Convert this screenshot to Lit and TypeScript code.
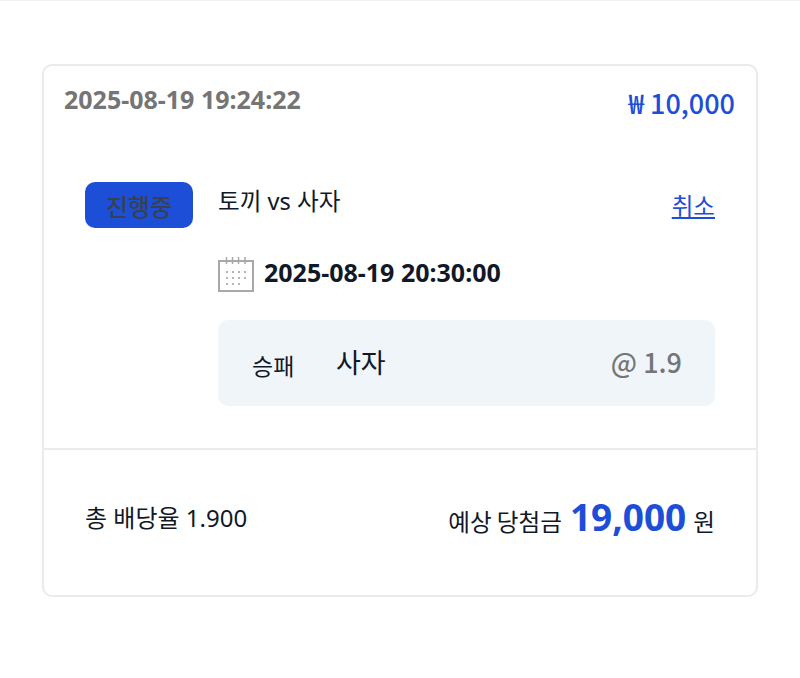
import { LitElement, html, css, svg } from "lit";
import { customElement } from "lit/decorators.js";

@customElement("app-root")
export class AppRoot extends LitElement {
  static styles = css`
    :host {
      display: block;
      width: 800px;
      height: 678px;
      box-sizing: border-box;
      background: #fff;
      border-top: 1px solid #f0f0f0;
      padding: 63px 42px 0;
      font-family: "Noto Sans", "Noto Sans CJK KR", sans-serif;
      color: #111827;
    }
    .card {
      box-sizing: border-box;
      height: 533px;
      border: 2px solid #e8ecef;
      border-radius: 10px;
      display: flex;
      flex-direction: column;
    }
    .top {
      display: flex;
      justify-content: space-between;
      padding: 16px 21px 0 20px;
    }
    .time { font-size: 25px; line-height: 34px; font-weight: 700; color: #757575; }
    .stake { font-family: "Noto Sans CJK KR", sans-serif; font-size: 27px; line-height: 38px; margin-top: 2px; font-weight: 500; color: #1d4ed8; }
    .body {
      flex: 1;
      display: flex;
      gap: 25px;
      padding: 60px 41px 0;
    }
    .badge {
      box-sizing: border-box;
      width: 108px;
      height: 46px;
      border-radius: 10px;
      background: #1d4ed8;
      color: #374151;
      font-size: 24px;
      font-weight: 500;
      display: flex;
      align-items: center;
      justify-content: center;
      flex: none;
    }
    .main { flex: 1; display: flex; flex-direction: column; }
    .title-row { display: flex; justify-content: space-between; }
    .title { font-size: 23.6px; line-height: 36px; margin-top: 1px; }
    .cancel { font-size: 23.5px; line-height: 36px; margin-top: 6px; color: #1d4ed8; text-decoration: underline; }
    .when { display: flex; align-items: center; gap: 10px; margin-top: 33px; font-size: 25px; font-weight: 700; height: 36px; }
    .when svg { display: block; flex: none; }
    .when span { margin-top: -6px; }
    .pick {
      margin-top: 27px;
      height: 86px;
      box-sizing: border-box;
      border-radius: 10px;
      background: #f0f5fa;
      display: flex;
      align-items: center;
      padding: 0 33px;
    }
    .kind { font-size: 23px; margin: 4px 0 0 1px; width: 84px; }
    .team { font-size: 27px; flex: 1; margin-top: -4px; }
    .odds { font-family: "Noto Sans CJK KR", sans-serif; font-size: 27px; font-weight: 500; color: #757575; margin-top: -3px; }
    .foot {
      height: 147px;
      box-sizing: border-box;
      border-top: 2px solid #e8ecef;
      display: flex;
      align-items: center;
      justify-content: space-between;
      padding: 0 41px 12px;
    }
    .total { font-size: 24px; }
    .win { display: flex; align-items: baseline; font-size: 23.6px; word-spacing: -1px; }
    .win b { font-size: 37px; font-weight: 700; color: #1d4ed8; margin: 0 7px 0 8px; }
  `;

  render() {
    return html`
      <div class="card">
        <div class="top">
          <div class="time">2025-08-19 19:24:22</div>
          <div class="stake">₩ 10,000</div>
        </div>
        <div class="body">
          <div class="badge">진행중</div>
          <div class="main">
            <div class="title-row">
              <div class="title">토끼 vs 사자</div>
              <div class="cancel">취소</div>
            </div>
            <div class="when">
              <svg width="36" height="36" viewBox="0 0 36 36" fill="none">
                <rect x="1" y="4" width="34" height="30" stroke="#a8a8a8" stroke-width="2"></rect>
                <path d="M8.5 0v7M14.5 0v7M20.5 0v7M27 0v7" stroke="#a8a8a8" stroke-width="1.5"></path>
                ${[14, 20, 26].map((y, r) =>
                  [8, 14, 20, 26].slice(0, r === 2 ? 3 : 4).map(
                    (x) => svg`<rect x=${x} y=${y} width="2" height="2" fill="#b5b5b5"></rect>`
                  )
                )}
              </svg>
              <span>2025-08-19 20:30:00</span>
            </div>
            <div class="pick">
              <div class="kind">승패</div>
              <div class="team">사자</div>
              <div class="odds">@ 1.9</div>
            </div>
          </div>
        </div>
        <div class="foot">
          <div class="total">총 배당율 1.900</div>
          <div class="win">예상 당첨금 <b>19,000</b> 원</div>
        </div>
      </div>
    `;
  }
}
